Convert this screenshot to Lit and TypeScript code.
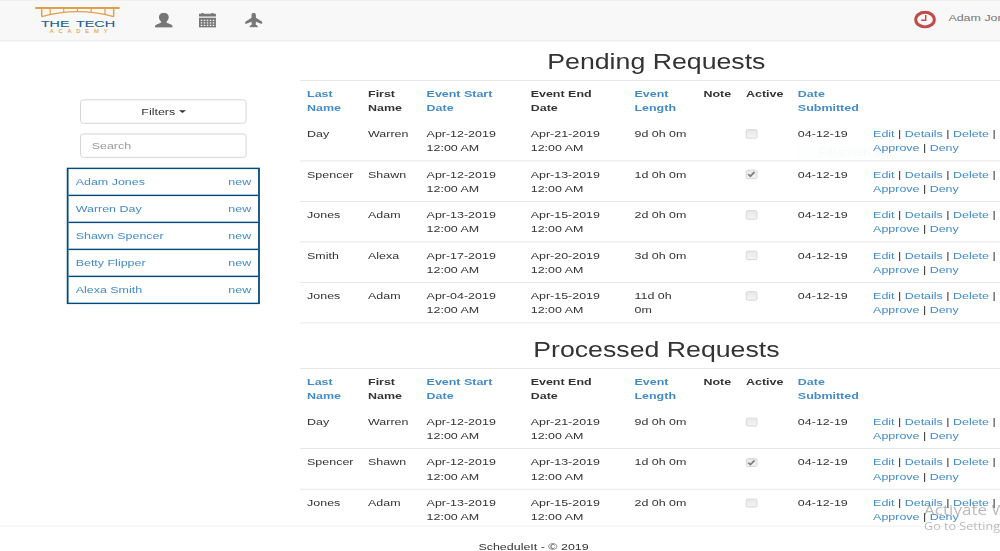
import { LitElement, html, css } from "lit";
import { customElement, property } from "lit/decorators.js";

interface RequestRow {
  last: string;
  first: string;
  start: string;
  end: string;
  length: string[];
  active: boolean;
}

const REQUESTS: RequestRow[] = [
  { last: "Day", first: "Warren", start: "Apr-12-2019", end: "Apr-21-2019", length: ["9d 0h 0m"], active: false },
  { last: "Spencer", first: "Shawn", start: "Apr-12-2019", end: "Apr-13-2019", length: ["1d 0h 0m"], active: true },
  { last: "Jones", first: "Adam", start: "Apr-13-2019", end: "Apr-15-2019", length: ["2d 0h 0m"], active: false },
  { last: "Smith", first: "Alexa", start: "Apr-17-2019", end: "Apr-20-2019", length: ["3d 0h 0m"], active: false },
  { last: "Jones", first: "Adam", start: "Apr-04-2019", end: "Apr-15-2019", length: ["11d 0h", "0m"], active: false },
];

const PEOPLE = ["Adam Jones", "Warren Day", "Shawn Spencer", "Betty Flipper", "Alexa Smith"];

@customElement("request-table")
export class RequestTable extends LitElement {
  @property() heading = "";
  @property({ attribute: false }) rows: RequestRow[] = [];

  static styles = css`
    :host { display: block; }
    h2 {
      margin: 0;
      height: 55.1px;
      line-height: 58px;
      font-size: 30px;
      font-weight: 400;
      text-align: center;
    }
    .row {
      display: grid;
      grid-template-columns: 68.5px 65.8px 117px 116.6px 77.5px 47.8px 58.3px 84.5px 1fr;
      height: 57px;
      box-sizing: border-box;
      border-bottom: 1.4px solid #ddd;
    }
    .head { border-bottom: 0; border-top: 1.4px solid #ddd; font-weight: 700; }
    .cell { padding: 8px 0 0 8px; line-height: 20px; white-space: nowrap; }
    .head .cell { padding-top: 7.2px; }
    a { color: #428bca; }
    .box {
      display: block;
      width: 12.4px;
      height: 12.4px;
      margin-top: 4.2px;
      box-sizing: border-box;
      border: 1px solid #ccc;
      border-radius: 2px;
      background: linear-gradient(#e8e8e8, #f4f4f4);
    }
    .box svg { display: block; width: 100%; height: 100%; }
  `;

  render() {
    return html`
      <h2>${this.heading}</h2>
      <div class="row head">
        <div class="cell"><a>Last<br />Name</a></div>
        <div class="cell">First<br />Name</div>
        <div class="cell"><a>Event Start<br />Date</a></div>
        <div class="cell">Event End<br />Date</div>
        <div class="cell"><a>Event<br />Length</a></div>
        <div class="cell">Note</div>
        <div class="cell">Active</div>
        <div class="cell"><a>Date<br />Submitted</a></div>
        <div class="cell"></div>
      </div>
      ${this.rows.map(
        (r) => html`<div class="row">
          <div class="cell">${r.last}</div>
          <div class="cell">${r.first}</div>
          <div class="cell">${r.start}<br />12:00 AM</div>
          <div class="cell">${r.end}<br />12:00 AM</div>
          <div class="cell">${r.length.map((part) => html`${part}<br />`)}</div>
          <div class="cell"></div>
          <div class="cell"><span class="box">${r.active
            ? html`<svg viewBox="0 0 11 11"><path d="M1.8 5.6 L4.4 8.4 L9.2 2.2" fill="none" stroke="#808080" stroke-width="2.4" /></svg>`
            : ""}</span></div>
          <div class="cell">04-12-19</div>
          <div class="cell"><a>Edit</a> | <a>Details</a> | <a>Delete</a> |<br /><a>Approve</a> | <a>Deny</a></div>
        </div>`
      )}
    `;
  }
}

@customElement("app-root")
export class AppRoot extends LitElement {
  static styles = css`
    :host {
      display: block;
      width: 1000px;
      height: 551px;
      overflow: hidden;
      position: relative;
      background: #fff;
      color: #333;
      font: 14px/20px "Liberation Sans", Arial, sans-serif;
    }
    /* The page is laid out in its own units and squeezed into the window. */
    .stage {
      width: 1123.6px;
      height: 775.5px;
      overflow: hidden;
      transform: scale(0.89, 0.7105);
      transform-origin: 0 0;
      display: flex;
      flex-direction: column;
    }
    .nav {
      flex: none;
      height: 58px;
      box-sizing: border-box;
      display: flex;
      align-items: flex-start;
      padding: 0 0 0 39px;
      background: #f8f8f8;
      border-top: 1.4px solid #eee;
      border-bottom: 1.4px solid #e7e7e7;
      overflow: hidden;
    }
    .nav svg { display: block; flex: none; }
    .logo { width: 96.6px; height: 40.8px; margin-top: 7.4px; }
    .user { width: 20.2px; height: 21.1px; margin: 16.9px 0 0 38.5px; }
    .cal { width: 20.2px; height: 21.1px; margin: 16.9px 0 0 29px; }
    .plane { width: 20.2px; height: 21.1px; margin: 16.9px 0 0 31.2px; }
    .clock { width: 24.7px; height: 25.3px; margin: 14px 0 0 auto; }
    .account { flex: none; width: 58px; margin: 13.2px 0 0 13.6px; color: #777; white-space: nowrap; }
    .body { flex: 1; min-height: 0; display: flex; overflow: hidden; }
    .side { flex: none; width: 217px; padding: 81.5px 45px 0 75px; }
    .btn, .search {
      height: 34px;
      margin: 0 14.6px 14.4px 14.6px;
      box-sizing: border-box;
      border: 1.2px solid #ccc;
      border-radius: 4px;
      line-height: 32px;
    }
    .btn { display: flex; align-items: center; justify-content: center; gap: 4.4px; padding-left: 1px; }
    .caret { border: 4.4px solid transparent; border-top-color: #333; border-bottom: 0; }
    .search { padding-left: 12.4px; color: #999; }
    .list { border: 2px solid #004b7d; margin-top: -0.2px; }
    .person {
      display: flex;
      justify-content: space-between;
      height: 38px;
      box-sizing: border-box;
      padding: 7.4px 7.8px 0 8px;
      border-bottom: 2px solid #004b7d;
      color: #428bca;
    }
    .person:last-child { border-bottom: 0; height: 36px; }
    .main { flex: none; width: 801px; }
    .second { margin-top: 8.2px; }
    .foot {
      flex: none;
      height: 35.5px;
      box-sizing: border-box;
      border-top: 1.4px solid #eee;
      padding-top: 18.4px;
      padding-left: 75.4px;
      text-align: center;
    }
    .tip {
      position: absolute;
      left: 797px;
      top: 146px;
      width: 133px;
      height: 13px;
      box-sizing: border-box;
      padding-left: 22px;
      background: rgba(66, 139, 202, 0.012);
      color: rgba(60, 80, 120, 0.04);
      font: 10px/13px "Open Sans", sans-serif;
      white-space: nowrap;
    }
    .mark {
      position: absolute;
      left: 924px;
      top: 501px;
      width: 76px;
      height: 32px;
      overflow: hidden;
      color: rgba(120, 120, 120, 0.5);
      font-family: "Open Sans", sans-serif;
    }
    .line { width: max-content; white-space: nowrap; transform-origin: 0 0; }
    .big { font-size: 14px; line-height: 17px; transform: scaleX(1.22); }
    .small { font-size: 10px; line-height: 16px; transform: scaleX(1.26); }
  `;

  private logo() {
    return html`<svg class="logo" viewBox="0 0 86 29" preserveAspectRatio="none">
      <g fill="none" stroke="#e2a04a">
        <path d="M0.5 2.3H85" stroke-width="1.8" />
        <path d="M7 2.3V11 M79 2.3V11" stroke-width="1.5" />
        <path d="M7 11Q43 1 79 11" stroke-width="1.3" />
        <path d="M15.5 2V8.4 M29 2V6.6 M42.7 2V6 M56.5 2V6.6 M70.3 2V8.4" stroke-width="1.2" />
      </g>
      <g font-size="9.6" fill="#20618f" stroke="#20618f" stroke-width="0.1">
        <text x="6.2" y="21.1" textLength="28.6" lengthAdjust="spacingAndGlyphs">THE</text>
        <text x="41.2" y="21.1" textLength="39.4" lengthAdjust="spacingAndGlyphs">TECH</text>
      </g>
      <text x="15" y="27.8" font-size="5.8" fill="#e2a04a" stroke="#e2a04a" stroke-width="0.1" textLength="58" lengthAdjust="spacing">ACADEMY</text>
    </svg>`;
  }

  render() {
    return html`
      <div class="stage">
        <div class="nav">
          ${this.logo()}
          <svg class="user" viewBox="0 0 18 15" preserveAspectRatio="none" fill="#777">
            <path d="M9 0C11.9 0 13.9 1.7 13.9 4.3C13.9 6.3 12.9 7.8 11.7 8.9V9.7C12.3 10.5 17.9 11.4 17.9 13.7V14.6H0.1V13.7C0.1 11.4 5.7 10.5 6.3 9.7V8.9C5.1 7.8 4.1 6.3 4.1 4.3C4.1 1.7 6.1 0 9 0Z" />
          </svg>
          <svg class="cal" viewBox="0 0 18 15" preserveAspectRatio="none" fill="#777">
            <path d="M0.5 1H3V0H5V1H13V0H15V1H17.5V3.8H0.5Z" />
            <path fill-rule="evenodd" d="M0.5 4.9H17.5V14.6H0.5ZM2.3 6.9V8.3H3.8V6.9ZM5.3 6.9V8.3H6.8V6.9ZM8.3 6.9V8.3H9.8V6.9ZM11.3 6.9V8.3H12.8V6.9ZM14.3 6.9V8.3H15.8V6.9ZM2.3 9.4V10.8H3.8V9.4ZM5.3 9.4V10.8H6.8V9.4ZM8.3 9.4V10.8H9.8V9.4ZM11.3 9.4V10.8H12.8V9.4ZM14.3 9.4V10.8H15.8V9.4ZM2.3 11.9V13.3H3.8V11.9ZM5.3 11.9V13.3H6.8V11.9ZM8.3 11.9V13.3H9.8V11.9ZM11.3 11.9V13.3H12.8V11.9ZM14.3 11.9V13.3H15.8V11.9Z" />
          </svg>
          <svg class="plane" viewBox="0 0 18 15" preserveAspectRatio="none" fill="#777">
            <path d="M9 0C10.3 0 11.2 1.2 11.2 2.6V5L17.1 8.8Q17.8 9.6 17.6 11L16.4 11L11.2 9L10.9 11.7L13 13.3V14.6L10.4 14.1L9 14.6L7.6 14.1L5 14.6V13.3L7.1 11.7L6.8 9L1.6 11L0.4 11Q0.2 9.6 0.9 8.8L6.8 5V2.6C6.8 1.2 7.7 0 9 0Z" />
          </svg>
          <svg class="clock" viewBox="0 0 22 18" preserveAspectRatio="none" fill="none" stroke="#c14b4b">
            <ellipse cx="11" cy="9" rx="9.3" ry="7.3" stroke-width="3" />
            <path d="M11.7 4.4V9.6H7.2" stroke-width="1.4" />
          </svg>
          <span class="account">Adam Jones</span>
        </div>
        <div class="body">
          <div class="side">
            <div class="btn">Filters<span class="caret"></span></div>
            <div class="search">Search</div>
            <div class="list">
              ${PEOPLE.map((name) => html`<div class="person"><span>${name}</span><span>new</span></div>`)}
            </div>
          </div>
          <div class="main">
            <request-table heading="Pending Requests" .rows=${REQUESTS}></request-table>
            <request-table class="second" heading="Processed Requests" .rows=${REQUESTS.slice(0, 3)}></request-table>
          </div>
        </div>
        <div class="foot">ScheduleIt - © 2019</div>
      </div>
      <div class="tip">Full-screen Snip</div>
      <div class="mark">
        <div class="line big">Activate Windows</div>
        <div class="line small">Go to Settings</div>
      </div>
    `;
  }
}
